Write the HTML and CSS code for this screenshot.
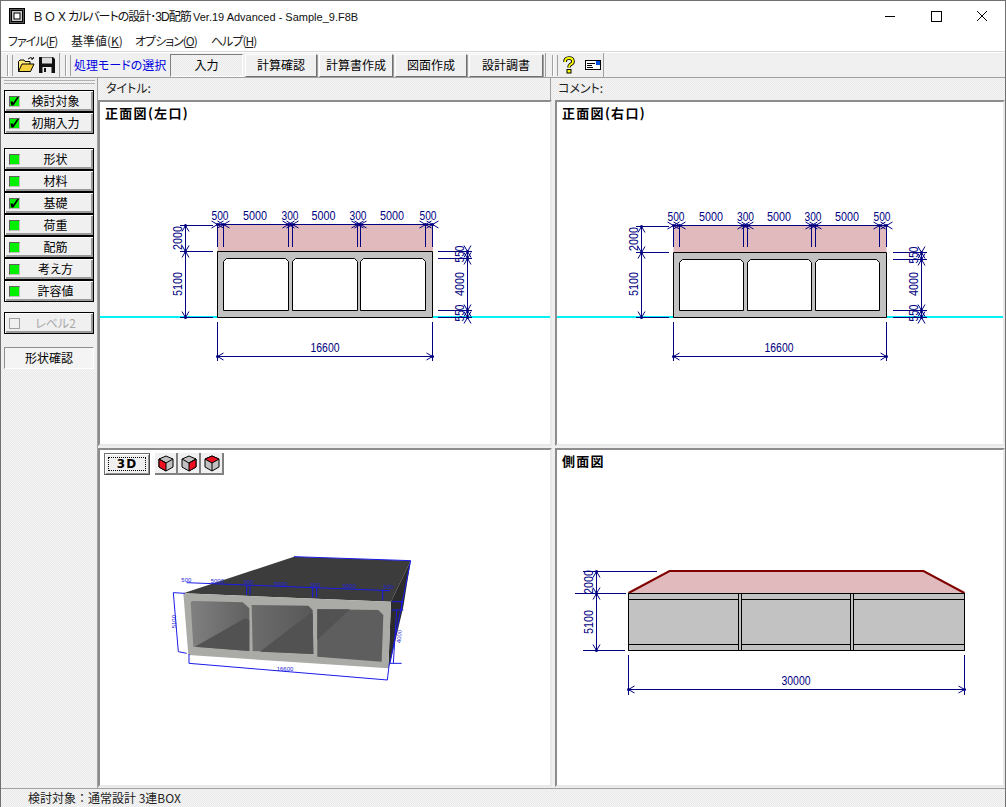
FILE: index.html
```html
<!DOCTYPE html>
<html lang="ja">
<head>
<meta charset="utf-8">
<title>BOXカルバートの設計</title>
<link rel="stylesheet" href="styles.css">
</head>
<body>
<div class="app">
  <header class="titlebar">
    <svg class="app-icon" viewBox="0 0 16 16" width="16" height="16"><rect x="0.5" y="0.5" width="15" height="15" fill="#555" stroke="#000"/><rect x="2.5" y="2.5" width="11" height="11" fill="#ccc" stroke="#000"/><rect x="5" y="5" width="6" height="6" fill="#fff" stroke="#000"/></svg>
    <span class="title-text"><span class="title-box">ＢＯＸ</span><span class="title-kana">カルバートの設計･3D配筋 </span><span class="title-latin">Ver.19 Advanced - Sample_9.F8B</span></span>
    <div class="win-controls">
      <svg viewBox="0 0 46 30" width="46" height="30"><path d="M18 15.5H28" stroke="#000"/></svg>
      <svg viewBox="0 0 46 30" width="46" height="30"><rect x="18.5" y="10.5" width="10" height="10" fill="none" stroke="#000"/></svg>
      <svg viewBox="0 0 46 30" width="46" height="30"><path d="M18 10L28 20M28 10L18 20" stroke="#000" fill="none"/></svg>
    </div>
  </header>
  <nav class="menubar">
    <span class="menu-item tight">ファイル(<u>F</u>)</span>
    <span class="menu-item">基準値(<u>K</u>)</span>
    <span class="menu-item tight">オプション(<u>O</u>)</span>
    <span class="menu-item tight">ヘルプ(<u>H</u>)</span>
  </nav>
  <div class="toolbar">
    <div class="tool-group group-file">
      <span class="gripper"></span>
      <svg class="tool-icon" viewBox="0 0 18 18" width="18" height="18"><path d="M1.5 15.500V5.500L3 4H7L8 5.500H13V8" fill="#ffe97a" stroke="#000"/><path d="M1.500 15.500L5 8H17L13.500 15.500Z" fill="#f4d03f" stroke="#000"/><path d="M11 3Q14 0 16 3M16 3L16.500 1M16 3L14 3" fill="none" stroke="#000"/></svg>
      <svg class="tool-icon" viewBox="0 0 18 18" width="18" height="18"><path d="M1 1H15L17 3V17H1Z" fill="#111"/><rect x="4" y="1.500" width="10" height="6" fill="#ddd"/><rect x="4.500" y="11" width="9" height="6" fill="#eee"/><rect x="6" y="12" width="2" height="4" fill="#111"/></svg>
    </div>
    <div class="tool-group group-mode">
      <span class="gripper"></span>
      <span class="mode-label">処理モードの選択</span>
      <span class="mode-btn is-active">入力</span>
      <span class="mode-btn w72">計算確認</span>
      <span class="mode-btn w74">計算書作成</span>
      <span class="mode-btn w72">図面作成</span>
      <span class="mode-btn w74">設計調書</span>
    </div>
    <div class="tool-group group-help">
      <span class="gripper"></span>
      <svg class="tool-icon help-icon" viewBox="0 0 14 18" width="14" height="18"><path d="M3 6Q3 2 7 2Q11 2 11 5.500Q11 7.500 8.500 8.500Q7 9.500 7 11.500" fill="none" stroke="#000" stroke-width="3.600"/><path d="M3 6Q3 2 7 2Q11 2 11 5.500Q11 7.500 8.500 8.500Q7 9.500 7 11.500" fill="none" stroke="#ff0" stroke-width="1.800"/><rect x="5" y="13.500" width="4" height="3.500" fill="#ff0" stroke="#000"/></svg>
      <svg class="tool-icon" viewBox="0 0 16 12" width="16" height="12"><rect x="0.500" y="1.500" width="15" height="9" fill="#fff" stroke="#000"/><rect x="11" y="2" width="4" height="4" fill="#0050e0"/><path d="M2 4.500H10M2 6.500H7M2 8.500H8" stroke="#000"/></svg>
    </div>
  </div>
  <div class="workspace">
    <aside class="sidebar">
      <div class="side-grip"></div>
      <div class="side-group">
        <div class="side-btn"><i class="led checked"></i><span>検討対象</span></div>
        <div class="side-btn"><i class="led checked"></i><span>初期入力</span></div>
      </div>
      <div class="side-group group-main">
        <div class="side-btn"><i class="led"></i><span>形状</span></div>
        <div class="side-btn"><i class="led"></i><span>材料</span></div>
        <div class="side-btn"><i class="led checked"></i><span>基礎</span></div>
        <div class="side-btn"><i class="led"></i><span>荷重</span></div>
        <div class="side-btn"><i class="led"></i><span>配筋</span></div>
        <div class="side-btn"><i class="led"></i><span>考え方</span></div>
        <div class="side-btn"><i class="led"></i><span>許容値</span></div>
      </div>
      <div class="side-group">
        <div class="side-btn is-disabled"><i class="led off"></i><span>レベル2</span></div>
      </div>
      <div class="side-plain">形状確認</div>
    </aside>
    <main class="main">
      <div class="heads">
        <div class="head head-left">タイトル:</div>
        <div class="head head-right">コメント:</div>
      </div>
      <div class="panes">
        <section class="pane">
          <h2 class="pane-title">正面図(左口)</h2>
          <svg class="drawing" viewBox="100 102 450 342" width="450" height="342">
            <defs>
              <g id="xh"><path d="M-6-3.500L6 3.500M-6 3.500L6-3.500" fill="none"/><circle r="1.500" class="dot"/></g>
              <g id="xv"><path d="M-3.500-6L3.500 6M3.500-6L-3.500 6" fill="none"/><circle r="1.500" class="dot"/></g>
              <g id="al"><path d="M6-3.500L0 0L6 3.500" fill="none"/><circle r="1.500" class="dot"/></g>
              <g id="ar"><path d="M-6-3.500L0 0L-6 3.500" fill="none"/><circle r="1.500" class="dot"/></g>
              <g id="au"><path d="M-3.500 6L0 0L3.500 6" fill="none"/><circle r="1.500" class="dot"/></g>
              <g id="ad"><path d="M-3.500-6L0 0L3.500-6" fill="none"/><circle r="1.500" class="dot"/></g>
              <linearGradient id="wall1" x1="0" x2="1" y1="0" y2="0"><stop offset="0" stop-color="#808080"/><stop offset="1" stop-color="#606060"/></linearGradient>
              <linearGradient id="wall2" x1="0" x2="1" y1="0" y2="0"><stop offset="0" stop-color="#6c6c6c"/><stop offset="1" stop-color="#585858"/></linearGradient>
            </defs>
            <path class="ground" d="M100 317H217M433 317H550"/>
            <rect class="soil" x="217.500" y="225" width="215.500" height="26"/>
            <path class="concrete" fill-rule="evenodd" d="M217.500 251.500H432.500V317.500H217.500ZM226.500 258.500H285.500L288.500 261.500V310.500H223.500V261.500ZM295.500 258.500H354.500L357.500 261.500V310.500H292.500V261.500ZM363.500 258.500H422.500L425.500 261.500V310.500H360.500V261.500Z"/>
            <g class="dim">
              <path d="M217.500 224.500H432.500M217.500 224.500V247M223.500 224.500V247M288.500 224.500V247M292.500 224.500V247M357.500 224.500V247M360.500 224.500V247M425.500 224.500V247M432.500 224.500V247"/>
              <use href="#xh" x="217.500" y="224.500"/><use href="#xh" x="223.500" y="224.500"/><use href="#xh" x="288.500" y="224.500"/><use href="#xh" x="292.500" y="224.500"/><use href="#xh" x="357.500" y="224.500"/><use href="#xh" x="360.500" y="224.500"/><use href="#xh" x="425.500" y="224.500"/><use href="#xh" x="432.500" y="224.500"/>
              <path d="M185.500 225.500V317.500M180 225.500H213M180 251.500H213M180 317.500H213"/>
              <use href="#au" x="185.500" y="225.500"/><use href="#xv" x="185.500" y="251.500"/><use href="#ad" x="185.500" y="317.500"/>
              <path d="M467.500 251.500V317.500M438 251.500H472M438 258.500H472M438 310.500H472M438 317.500H472"/>
              <use href="#xv" x="467.500" y="251.500"/><use href="#xv" x="467.500" y="258.500"/><use href="#xv" x="467.500" y="310.500"/><use href="#xv" x="467.500" y="317.500"/>
              <path d="M217.500 322V361M432.500 322V361M217.500 356.500H432.500"/>
              <use href="#al" x="217.500" y="356.500"/><use href="#ar" x="432.500" y="356.500"/>
            </g>
            <g class="dim-text">
              <text x="220" y="220" textLength="17" lengthAdjust="spacingAndGlyphs">500</text>
              <text x="255" y="220" textLength="24" lengthAdjust="spacingAndGlyphs">5000</text>
              <text x="290" y="220" textLength="17" lengthAdjust="spacingAndGlyphs">300</text>
              <text x="323.500" y="220" textLength="24" lengthAdjust="spacingAndGlyphs">5000</text>
              <text x="358" y="220" textLength="17" lengthAdjust="spacingAndGlyphs">300</text>
              <text x="392" y="220" textLength="24" lengthAdjust="spacingAndGlyphs">5000</text>
              <text x="428" y="220" textLength="17" lengthAdjust="spacingAndGlyphs">500</text>
              <text x="325" y="352" textLength="29" lengthAdjust="spacingAndGlyphs">16600</text>
              <text transform="translate(182 238) rotate(-90)" textLength="24" lengthAdjust="spacingAndGlyphs">2000</text>
              <text transform="translate(182 284) rotate(-90)" textLength="24" lengthAdjust="spacingAndGlyphs">5100</text>
              <text transform="translate(464 254) rotate(-90)" textLength="17" lengthAdjust="spacingAndGlyphs">550</text>
              <text transform="translate(464 284) rotate(-90)" textLength="24" lengthAdjust="spacingAndGlyphs">4000</text>
              <text transform="translate(464 313) rotate(-90)" textLength="17" lengthAdjust="spacingAndGlyphs">550</text>
            </g>
          </svg>
        </section>
        <section class="pane">
          <h2 class="pane-title">正面図(右口)</h2>
          <svg class="drawing" viewBox="557 102 446 342" width="446" height="342">
            <path class="ground" d="M557 317H673M887 317H1003"/>
            <rect class="soil" x="673.500" y="226" width="213" height="26"/>
            <path class="concrete" fill-rule="evenodd" d="M673.500 252.500H886.500V317.500H673.500ZM682.500 259.500H740.500L743.500 262.500V310.500H679.500V262.500ZM750.500 259.500H808.500L811.500 262.500V310.500H747.500V262.500ZM818.500 259.500H876.500L879.500 262.500V310.500H815.500V262.500Z"/>
            <g class="dim">
              <path d="M673.500 225.500H886.500M673.500 225.500V247M679.500 225.500V247M743.500 225.500V247M747.500 225.500V247M811.500 225.500V247M815.500 225.500V247M879.500 225.500V247M886.500 225.500V247"/>
              <use href="#xh" x="673.500" y="225.500"/><use href="#xh" x="679.500" y="225.500"/><use href="#xh" x="743.500" y="225.500"/><use href="#xh" x="747.500" y="225.500"/><use href="#xh" x="811.500" y="225.500"/><use href="#xh" x="815.500" y="225.500"/><use href="#xh" x="879.500" y="225.500"/><use href="#xh" x="886.500" y="225.500"/>
              <path d="M641.500 226.500V317.500M636 226.500H669M636 252.500H669M636 317.500H669"/>
              <use href="#au" x="641.500" y="226.500"/><use href="#xv" x="641.500" y="252.500"/><use href="#ad" x="641.500" y="317.500"/>
              <path d="M921.500 252.500V317.500M893 252.500H927M893 259.500H927M893 310.500H927M893 317.500H927"/>
              <use href="#xv" x="921.500" y="252.500"/><use href="#xv" x="921.500" y="259.500"/><use href="#xv" x="921.500" y="310.500"/><use href="#xv" x="921.500" y="317.500"/>
              <path d="M673.500 322V361M886.500 322V361M673.500 356.500H886.500"/>
              <use href="#al" x="673.500" y="356.500"/><use href="#ar" x="886.500" y="356.500"/>
            </g>
            <g class="dim-text">
              <text x="676" y="221" textLength="17" lengthAdjust="spacingAndGlyphs">500</text>
              <text x="711" y="221" textLength="24" lengthAdjust="spacingAndGlyphs">5000</text>
              <text x="745.500" y="221" textLength="17" lengthAdjust="spacingAndGlyphs">300</text>
              <text x="779" y="221" textLength="24" lengthAdjust="spacingAndGlyphs">5000</text>
              <text x="813" y="221" textLength="17" lengthAdjust="spacingAndGlyphs">300</text>
              <text x="847" y="221" textLength="24" lengthAdjust="spacingAndGlyphs">5000</text>
              <text x="882" y="221" textLength="17" lengthAdjust="spacingAndGlyphs">500</text>
              <text x="779" y="352" textLength="29" lengthAdjust="spacingAndGlyphs">16600</text>
              <text transform="translate(638 239) rotate(-90)" textLength="24" lengthAdjust="spacingAndGlyphs">2000</text>
              <text transform="translate(638 284) rotate(-90)" textLength="24" lengthAdjust="spacingAndGlyphs">5100</text>
              <text transform="translate(917.500 255) rotate(-90)" textLength="17" lengthAdjust="spacingAndGlyphs">550</text>
              <text transform="translate(917.500 284) rotate(-90)" textLength="24" lengthAdjust="spacingAndGlyphs">4000</text>
              <text transform="translate(917.500 313) rotate(-90)" textLength="17" lengthAdjust="spacingAndGlyphs">550</text>
            </g>
          </svg>
        </section>
        <section class="pane">
          <div class="view-tools">
            <span class="btn-3d"><span>3D</span></span>
            <span class="cube-btn"><svg viewBox="0 0 18 18" width="18" height="18"><path d="M9 2L16 5V13L9 17L2 13V5Z" fill="#c0c0c0" stroke="#000"/><path d="M2 5L9 9V17L2 13Z" fill="#f01020" stroke="#000"/><path d="M2 5L9 9L16 5" fill="none" stroke="#000"/></svg></span>
            <span class="cube-btn"><svg viewBox="0 0 18 18" width="18" height="18"><path d="M9 2L16 5V13L9 17L2 13V5Z" fill="#c0c0c0" stroke="#000"/><path d="M16 5L9 9V17L16 13Z" fill="#f01020" stroke="#000"/><path d="M2 5L9 9L16 5" fill="none" stroke="#000"/></svg></span>
            <span class="cube-btn"><svg viewBox="0 0 18 18" width="18" height="18"><path d="M9 2L16 5V13L9 17L2 13V5Z" fill="#c0c0c0" stroke="#000"/><path d="M9 2L16 5L9 9L2 5Z" fill="#f01020" stroke="#000"/><path d="M9 9V17" fill="none" stroke="#000"/></svg></span>
          </div>
          <svg class="drawing" viewBox="100 450 450 335" width="450" height="335">
            <g transform="translate(170 550) scale(.33333)">
              <path class="top3d" d="M40 130L372 20L722 32L663 155Z"/>
              <path class="side3d" d="M663 155L722 32L700 170L660 340L655 355Z"/>
              <path class="front3d" d="M40 130L663 155L655 355L55 315Z"/>
              <path class="void-a" d="M62 158Q62 153 70 153L218 157L238 175L238 303L70 290Z"/>
              <path class="void-floor" d="M75 290L225 205L238 210V303Z"/>
              <path class="void-b" d="M245 165L415 167L428 180L430 312L248 303Z"/>
              <path class="void-floor" d="M270 305L420 190L428 190L430 312Z"/>
              <path class="void-c" d="M442 178L625 180L640 195L635 335L442 320Z"/>
              <path class="void-floor" d="M442 178H540L442 270Z"/>
              <g class="dim3d">
                <path d="M50 98L660 122M372 20L722 32L660 340M10 128L25 305L50 310M10 128L45 130M57 340L652 390L658 340M57 340V312M230 105V135M240 105V135M428 112V142M440 112V142M638 120V152M665 155H700M665 180H700M660 340H695"/>
                <path d="M695 152V180M680 180L670 340"/>
              </g>
              <g class="dim3d-text">
                <text x="34" y="95">500</text><text x="122" y="99">5000</text><text x="220" y="102">300</text><text x="312" y="107">5000</text><text x="420" y="110">300</text><text x="518" y="115">5000</text><text x="640" y="118">500</text>
                <text x="320" y="363">16600</text>
                <text transform="translate(17 235) rotate(-90)">5100</text>
                <text transform="translate(692 280) rotate(-85)">4000</text>
              </g>
            </g>
          </svg>
        </section>
        <section class="pane">
          <h2 class="pane-title">側面図</h2>
          <svg class="drawing" viewBox="557 450 446 335" width="446" height="335">
            <path class="soil-side" d="M628.500 593L669.500 571H923.500L964.500 593"/>
            <rect class="concrete" x="628.500" y="593.500" width="336" height="57"/>
            <path class="inner" d="M628.500 599.500H738.500M741.500 599.500H850.500M853.500 599.500H964.500M628.500 644.500H738.500M741.500 644.500H850.500M853.500 644.500H964.500M738.500 593.500V650.500M741.500 593.500V650.500M850.500 593.500V650.500M853.500 593.500V650.500"/>
            <g class="dim">
              <path d="M596.500 571.500V650.500M583 571.500H657M575 593.500H626M583 650.500H625M628.500 655V695M964.500 655V695M628.500 689.500H964.500"/>
              <use href="#au" x="596.500" y="571.500"/><use href="#xv" x="596.500" y="593.500"/><use href="#ad" x="596.500" y="650.500"/>
              <use href="#al" x="628.500" y="689.500"/><use href="#ar" x="964.500" y="689.500"/>
            </g>
            <g class="dim-text">
              <text x="796" y="685" textLength="29" lengthAdjust="spacingAndGlyphs">30000</text>
              <text transform="translate(593 582) rotate(-90)" textLength="24" lengthAdjust="spacingAndGlyphs">2000</text>
              <text transform="translate(593 622) rotate(-90)" textLength="24" lengthAdjust="spacingAndGlyphs">5100</text>
            </g>
          </svg>
        </section>
      </div>
    </main>
  </div>
  <footer class="statusbar">検討対象：通常設計 3連BOX</footer>
</div>
</body>
</html>
```
FILE: styles.css
```css
* { box-sizing: border-box; }
html, body { margin: 0; padding: 0; }
body { width: 1006px; height: 807px; overflow: hidden; background: #f0f0f0; }
.app {
  width: 1006px; height: 807px; display: flex; flex-direction: column;
  font: 12px/1 "Noto Sans CJK JP", "Liberation Sans", sans-serif; color: #000;
  font-feature-settings: "palt";
  border-top: 1px solid #707070; border-left: 1px solid #707070; border-right: 1px solid #707070;
  --dither: repeating-conic-gradient(#f5f5f5 0 25%, #e9e9e9 0 50%) 0 0 / 2px 2px;
}
.titlebar { height: 29px; display: flex; align-items: center; background: #fff; padding-left: 8px; flex: none; }
.app-icon { flex: none; }
.title-text { margin-left: 7px; font: 12px/1 "Liberation Sans", "Noto Sans CJK JP", sans-serif; font-feature-settings: "palt"; color: #111; white-space: nowrap; position: relative; top: 1px; }
.title-box { font-feature-settings: normal; }
.title-kana { letter-spacing: -1px; }
.title-latin { font-size: 11px; }
.win-controls { margin-left: auto; display: flex; }
.menubar { height: 22px; flex: none; background: #fff; display: flex; align-items: center; padding-left: 7px; border-bottom: 1px solid #d8d8d8; }
.menu-item { color: #222; white-space: nowrap; }
.menu-item.tight { letter-spacing: -1px; }
.menu-item:nth-child(1) { width: 63px; }
.menu-item:nth-child(2) { width: 64px; }
.menu-item:nth-child(3) { width: 76px; }
.toolbar { height: 26px; flex: none; display: flex; background: #f0f0f0; border-top: 1px solid #fff; border-bottom: 1px solid #a0a0a0; }
.tool-group { display: flex; align-items: center; height: 24px; border-right: 1px solid #a0a0a0; padding-left: 6px; flex: none; }
.group-file { width: 59px; }
.group-mode { width: 486px; padding-left: 5px; }
.group-help { width: 58px; }
.gripper { width: 6px; height: 21px; border-left: 1px solid #a0a0a0; border-right: 1px solid #a0a0a0; box-shadow: inset 1px 0 #fff; flex: none; margin-right: 3px; }
.group-file .tool-icon:first-of-type { margin-left: 1px; margin-right: 3px; }
.group-help .help-icon { margin: 0 9px 0 1px; }
.mode-label { color: #0000e0; width: 96px; flex: none; white-space: nowrap; }
.mode-btn { height: 23px; display: flex; align-items: center; justify-content: center; background: #f0f0f0; border: 1px solid; border-color: #fff #707070 #707070 #fff; box-shadow: 1px 1px #a0a0a0; margin-right: 2px; flex: none; }
.w72 { width: 72px; }
.w74 { width: 74px; }
.mode-btn.is-active { width: 73px; background: var(--dither); border-color: #808080 #fff #fff #808080; box-shadow: none; }
.workspace { flex: 1; min-height: 0; display: flex; }
.sidebar { width: 97px; flex: none; background: var(--dither); padding: 2px 0 0 3px; border-right: 1px solid #a0a0a0; }
.side-grip { height: 4px; width: 91px; margin-bottom: 6px; border-top: 1px solid #b0b0b0; border-bottom: 1px solid #b0b0b0; }
.side-group { margin-bottom: 14px; }
.side-group.group-main { margin-bottom: 10px; }
.side-btn { width: 90px; height: 22px; display: flex; align-items: center; background: #f0f0f0; border: 1px solid #000; box-shadow: inset 1px 1px #fff, inset -2px -2px #9a9a9a; padding-left: 4px; }
.side-btn span { flex: 1; text-align: center; font-size: 12px; padding-right: 2px; }
.led { width: 11px; height: 11px; background: #00f000; border: 1px solid; border-color: #606060 #c0c0c0 #c0c0c0 #606060; flex: none; display: block; position: relative; }
.led.checked::after { content: ""; position: absolute; inset: 0; background: #000; clip-path: polygon(5% 55%, 28% 55%, 35% 70%, 80% 5%, 100% 5%, 38% 100%, 15% 100%); }
.led.off { background: transparent; border-color: #a0a0a0; }
.is-disabled { color: #a8a8a8; }
.side-plain { width: 90px; height: 22px; margin-top: -1px; display: flex; align-items: center; justify-content: center; background: #f4f4f4; border: 1px solid; border-color: #909090 #fff #fff #909090; }
.main { flex: 1; min-width: 0; display: flex; flex-direction: column; background: var(--dither); }
.heads { height: 22px; display: flex; flex: none; }
.head { display: flex; align-items: center; height: 22px; padding-bottom: 2px; color: #222; }
.head-left { width: 453px; padding-left: 8px; border-right: 1px solid #a0a0a0; }
.head-right { flex: 1; padding-left: 7px; }
.panes { flex: 1; min-height: 0; display: grid; grid-template-columns: 454px 450px; grid-template-rows: 346px 339px; column-gap: 3px; row-gap: 2px; }
.pane { position: relative; background: #fff; border: 2px solid; border-color: #8c8c8c #e8e8e8 #e8e8e8 #8c8c8c; overflow: hidden; }
.pane-title { position: absolute; left: 5px; top: 4px; margin: 0; font-size: 13px; font-weight: 700; line-height: 14px; letter-spacing: 1.300px; font-feature-settings: normal; }
.drawing { display: block; }
.ground { stroke: #00f0f4; stroke-width: 2; fill: none; }
.soil { fill: #e0babc; }
.soil-side { fill: #e0babc; stroke: #800000; stroke-width: 2; }
.concrete { fill: #c2c2c2; stroke: #000; stroke-width: 1; }
.inner { fill: none; stroke: #000; stroke-width: 1; }
.dim { stroke: #000080; stroke-width: 1; fill: none; }
.dot { fill: #000080; stroke: none; }
.dim-text text { fill: #000080; font: 12px "Liberation Sans", sans-serif; text-anchor: middle; }
.top3d { fill: #3c3c3c; }
.side3d { fill: #2c2c2c; }
.front3d { fill: #aaaaa6; }
.void-a { fill: url(#wall1); }
.void-b { fill: url(#wall2); }
.void-c { fill: #5e5e5e; }
.void-floor { fill: #525252; }
.dim3d { fill: none; stroke: #1a1ae8; stroke-width: 3; }
.dim3d-text text { fill: #2424d8; font: 18px "Liberation Sans", sans-serif; }
.view-tools { position: absolute; left: 4px; top: 3px; display: flex; align-items: flex-start; }
.btn-3d { width: 46px; height: 22px; border: 1px solid; border-color: #707070 #505050 #505050 #707070; box-shadow: inset 1px 1px #fff, inset -1px -1px #909090; background: #f0f0f0; margin-right: 5px; display: flex; align-items: center; justify-content: center; }
.btn-3d span { border: 1px dotted #000; width: 38px; height: 14px; text-align: center; font: 700 12px/13px "DejaVu Sans", sans-serif; letter-spacing: 1px; }
.cube-btn { width: 23px; height: 22px; background: #f0f0f0; border-right: 2px solid #808080; border-bottom: 2px solid #808080; display: flex; align-items: center; justify-content: center; }
.statusbar { height: 19px; flex: none; padding: 3px 0 0 27px; background: var(--dither); border-top: 1px solid #a0a0a0; color: #222; font-feature-settings: normal; }
```
